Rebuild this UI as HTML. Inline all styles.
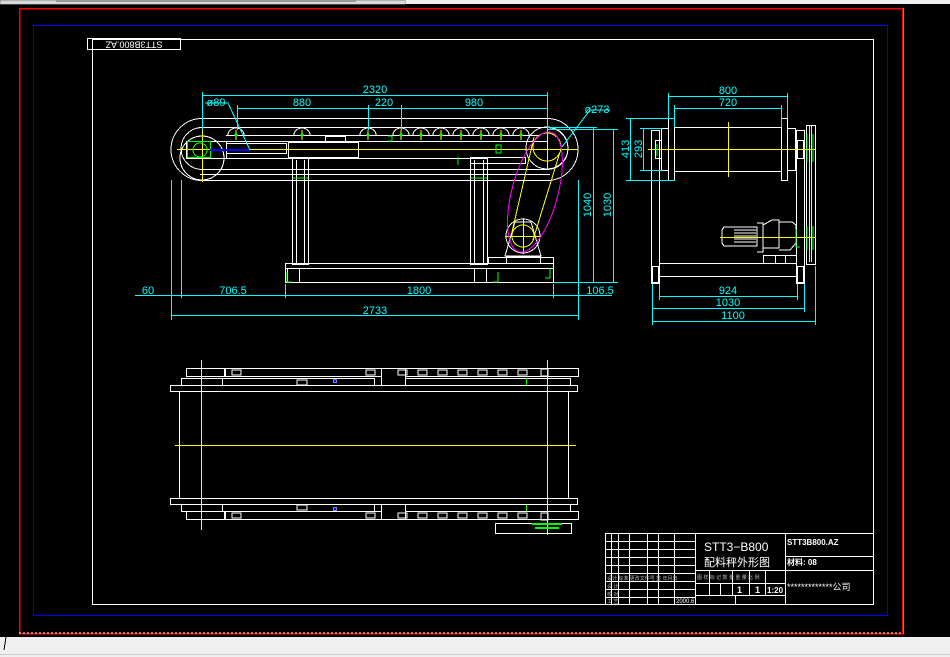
<!DOCTYPE html>
<html><head><meta charset="utf-8"><style>
html,body{margin:0;padding:0;background:#000;width:950px;height:657px;overflow:hidden}
svg{display:block}
text{font-family:"Liberation Sans","Noto Sans CJK SC",sans-serif}
</style></head><body>
<svg width="950" height="657" viewBox="0 0 950 657" xmlns="http://www.w3.org/2000/svg" shape-rendering="crispEdges">
<rect width="950" height="657" fill="#000"/>
<!-- top toolbar -->
<rect x="0" y="0" width="950" height="4" fill="#f0f0f0"/>
<rect x="0" y="0" width="405" height="4" fill="#d8d8d8" stroke="#888" stroke-width="0.5"/>
<rect x="56" y="0" width="300" height="2" fill="#999"/>
<!-- bottom bar -->
<rect x="0" y="637" width="950" height="20" fill="#f0f0f0"/>
<line x1="0" y1="654.5" x2="950" y2="654.5" stroke="#ccc"/>
<line x1="6" y1="637" x2="4" y2="650" stroke="#000"/>
<!-- borders -->
<rect x="19.5" y="8.5" width="883" height="625" fill="none" stroke="#f00" stroke-width="1.5"/>
<line x1="19" y1="633" x2="903" y2="633" stroke="#fff" stroke-dasharray="2,2"/>
<line x1="903.5" y1="8" x2="903.5" y2="634" stroke="#888"/>
<rect x="33.5" y="25.5" width="854" height="15" fill="none" stroke="#00f" stroke-width="0"/>
<rect x="33.5" y="25.5" width="854" height="590" fill="none" stroke="#00f" stroke-width="1.3"/>
<rect x="92.5" y="39.5" width="781" height="565" fill="none" stroke="#fff"/>
<!-- stamp -->
<rect x="87.5" y="38.5" width="93" height="11" fill="none" stroke="#fff"/>
<line x1="92.5" y1="38" x2="92.5" y2="50" stroke="#fff"/>
<text x="134" y="44" transform="rotate(180 134 44)" text-anchor="middle" dominant-baseline="middle" fill="#fff" font-size="9">STT3B800.AZ</text>

<g fill="none" stroke="#fff" stroke-width="1">
<!-- FRONT VIEW belt -->
<path d="M202 118.5 H547 A31 31 0 0 1 547 180.5 H202 A31 31 0 0 1 202 118.5Z"/>
<path d="M202 127.5 H547 A21 21 0 0 1 547 169.5 H202 A21 21 0 0 1 202 127.5Z"/>
<circle cx="202" cy="158" r="22"/>
<circle cx="547" cy="148" r="21"/>
<line x1="202" y1="141.5" x2="547" y2="141.5"/>
<line x1="226" y1="135.5" x2="540" y2="135.5"/>
<line x1="226" y1="158.5" x2="470" y2="158.5"/>
<line x1="200" y1="174.5" x2="550" y2="174.5"/>
<rect x="186.5" y="141.5" width="40" height="17"/>
<rect x="226.5" y="143.5" width="60" height="10"/>
<rect x="288.5" y="142.5" width="70" height="15"/>
<rect x="325.5" y="136.5" width="20" height="5"/>
<rect x="470.5" y="157.5" width="55" height="6"/>
<!-- idlers -->
<g>
<path d="M228 135 a8 7 0 0 1 16 0"/><path d="M294 135 a8 7 0 0 1 16 0"/><path d="M360 135 a8 7 0 0 1 16 0"/><path d="M393 135 a8 7 0 0 1 16 0"/><path d="M413 135 a8 7 0 0 1 16 0"/><path d="M433 135 a8 7 0 0 1 16 0"/><path d="M453 135 a8 7 0 0 1 16 0"/><path d="M473 135 a8 7 0 0 1 16 0"/><path d="M493 135 a8 7 0 0 1 16 0"/><path d="M513 135 a8 7 0 0 1 16 0"/>
</g>
<!-- legs -->
<rect x="292.5" y="158.5" width="16" height="106"/>
<line x1="296.5" y1="160" x2="296.5" y2="264"/><line x1="304.5" y1="160" x2="304.5" y2="264"/>
<rect x="470.5" y="158.5" width="17" height="106"/>
<line x1="474.5" y1="160" x2="474.5" y2="264"/><line x1="483.5" y1="160" x2="483.5" y2="264"/>
<rect x="285.5" y="263.5" width="268" height="19"/>
<line x1="285" y1="268.5" x2="553" y2="268.5"/>
<rect x="287.5" y="268.5" width="12" height="14"/><rect x="474.5" y="268.5" width="12" height="14"/>
<rect x="488.5" y="257.5" width="65" height="6"/>
<!-- drive -->
<circle cx="523" cy="236" r="17"/>
<path d="M505 256 L515 222 L531 222 L541 256Z"/>
<rect x="506.5" y="256.5" width="34" height="7"/>
</g>
<!-- yellow center lines -->
<g stroke="#ff0" stroke-width="1" fill="none">
<line x1="177" y1="149.5" x2="578" y2="149.5"/>
<line x1="202.5" y1="125" x2="202.5" y2="182"/>
<line x1="547.5" y1="128" x2="547.5" y2="170"/>
<circle cx="547" cy="147" r="14"/>
<circle cx="523" cy="236" r="11"/>
<line x1="534" y1="137" x2="512" y2="232"/>
<line x1="560" y1="152" x2="533" y2="240"/>
<line x1="505" y1="236.5" x2="541" y2="236.5"/>
<line x1="523.5" y1="218" x2="523.5" y2="254"/>
<g stroke-width="1"><line x1="236" y1="130" x2="236" y2="140"/><line x1="302" y1="130" x2="302" y2="140"/><line x1="368" y1="130" x2="368" y2="140"/><line x1="401" y1="130" x2="401" y2="140"/><line x1="421" y1="130" x2="421" y2="140"/><line x1="441" y1="130" x2="441" y2="140"/><line x1="461" y1="130" x2="461" y2="140"/><line x1="481" y1="130" x2="481" y2="140"/><line x1="501" y1="130" x2="501" y2="140"/><line x1="521" y1="130" x2="521" y2="140"/></g>
</g>
<ellipse cx="535" cy="192" rx="23" ry="62" transform="rotate(15 535 192)" fill="none" stroke="#f0f" stroke-width="1"/>
<!-- green bits -->
<g stroke="#0f0" fill="none">
<rect x="187.5" y="141.5" width="23" height="16"/>
<circle cx="200" cy="150" r="7"/>
<path d="M293 178 H308 M471 178 H487 M287 272 v10 h5 M498 272 v10 h-5 M550 268 v10 h-5 M458 157 v8 M388 136 h4 v5 h-4"/>
<rect x="496" y="145" width="5" height="8"/>
</g>
<g fill="#0f0"><circle cx="236" cy="135" r="1.5"/><circle cx="302" cy="135" r="1.5"/><circle cx="368" cy="135" r="1.5"/><circle cx="401" cy="135" r="1.5"/><circle cx="421" cy="135" r="1.5"/><circle cx="441" cy="135" r="1.5"/><circle cx="461" cy="135" r="1.5"/><circle cx="481" cy="135" r="1.5"/><circle cx="501" cy="135" r="1.5"/><circle cx="521" cy="135" r="1.5"/></g>
<line x1="210" y1="150" x2="250" y2="150" stroke="#00f" stroke-width="2"/>
<!-- dims cyan front -->
<g stroke="#0ff" stroke-width="1" fill="none">
<line x1="202" y1="95.5" x2="547" y2="95.5"/>
<line x1="237" y1="108.5" x2="547" y2="108.5"/>
<line x1="202.5" y1="92" x2="202.5" y2="130"/><line x1="547.5" y1="92" x2="547.5" y2="130"/>
<line x1="237.5" y1="105" x2="237.5" y2="130"/><line x1="368.5" y1="105" x2="368.5" y2="130"/><line x1="401.5" y1="105" x2="401.5" y2="130"/>
<path d="M205 103 H228 L250 150"/>
<path d="M610 110 H590 L562 147"/>
<line x1="135" y1="295.5" x2="612" y2="295.5"/>
<line x1="171.5" y1="180" x2="171.5" y2="320"/><line x1="578.5" y1="180" x2="578.5" y2="320"/>
<line x1="181.5" y1="180" x2="181.5" y2="298"/><line x1="285.5" y1="284" x2="285.5" y2="298"/><line x1="553.5" y1="284" x2="553.5" y2="298"/>
<line x1="171" y1="315.5" x2="578" y2="315.5"/>
<line x1="548" y1="127.5" x2="597" y2="127.5"/><line x1="548" y1="129.5" x2="618" y2="129.5"/><line x1="554" y1="282.5" x2="618" y2="282.5"/>
<line x1="593.5" y1="127" x2="593.5" y2="283"/><line x1="613.5" y1="129" x2="613.5" y2="283"/>
</g>
<g fill="#0ff" font-size="11" text-anchor="middle">
<text x="375" y="93">2320</text><text x="302" y="106">880</text><text x="384" y="106">220</text><text x="474" y="106">980</text>
<text x="216" y="106">ø89</text><text x="597" y="113">ø273</text>
<text x="148" y="294">60</text><text x="233" y="294">706.5</text><text x="419" y="294">1800</text><text x="600" y="294">106.5</text>
<text x="375" y="314">2733</text>
<text transform="translate(591 205) rotate(-90)">1040</text>
<text transform="translate(611 205) rotate(-90)">1030</text>
</g>

<!-- SIDE VIEW -->
<g fill="none" stroke="#fff">
<rect x="668.5" y="118.5" width="6" height="62"/>
<rect x="661.5" y="128.5" width="7" height="42"/>
<rect x="674.5" y="127.5" width="107" height="44"/>
<rect x="781.5" y="118.5" width="6" height="62"/>
<rect x="787.5" y="128.5" width="8" height="42"/>
<rect x="651.5" y="130.5" width="8" height="153"/>
<rect x="796.5" y="130.5" width="8" height="153"/>
<rect x="806.5" y="125.5" width="9" height="139"/>
<rect x="659.5" y="263.5" width="137" height="13"/>
<rect x="652.5" y="266.5" width="6" height="16"/><rect x="797.5" y="266.5" width="6" height="16"/>
<rect x="655.5" y="140.5" width="6" height="18"/><rect x="797.5" y="140.5" width="6" height="18"/>
<path d="M724 227 H757 V246 H724 L722 243 V230Z"/>
<path d="M757 223 H763 V252 H757"/>
<path d="M763 225 L772 220 H779 V248 H763"/>
<path d="M779 222 H792 L796 225 V243 L790 250 H779"/>
<rect x="763.5" y="255.5" width="33" height="8"/><rect x="775.5" y="255.5" width="10" height="8"/>
</g>
<g stroke="#fff"><line x1="734" y1="230" x2="756" y2="230"/><line x1="734" y1="233" x2="756" y2="233"/><line x1="734" y1="236" x2="756" y2="236"/><line x1="734" y1="239" x2="756" y2="239"/><line x1="734" y1="242" x2="756" y2="242"/></g>
<g stroke="#ff0" fill="none">
<line x1="648" y1="149.5" x2="815" y2="149.5"/>
<line x1="728.5" y1="122" x2="728.5" y2="177"/>
<line x1="720" y1="237.5" x2="816" y2="237.5"/>
<line x1="809.5" y1="126" x2="809.5" y2="262"/><line x1="811.5" y1="126" x2="811.5" y2="262"/>
</g>
<g stroke="#0f0" fill="none"><path d="M657 144 v12 M807 134 v28 M813 134 v28 M807 226 v24 M813 226 v24 M796 229 v18 h4"/></g>
<g stroke="#0ff" fill="none">
<line x1="668" y1="96.5" x2="787" y2="96.5"/><line x1="675" y1="108.5" x2="781" y2="108.5"/>
<line x1="668.5" y1="93" x2="668.5" y2="118"/><line x1="787.5" y1="93" x2="787.5" y2="118"/>
<line x1="674.5" y1="105" x2="674.5" y2="127"/><line x1="781.5" y1="105" x2="781.5" y2="127"/>
<line x1="626" y1="118.5" x2="675" y2="118.5"/><line x1="626" y1="180.5" x2="675" y2="180.5"/>
<line x1="640" y1="128.5" x2="662" y2="128.5"/><line x1="640" y1="170.5" x2="662" y2="170.5"/>
<line x1="630.5" y1="118" x2="630.5" y2="181"/><line x1="643.5" y1="128" x2="643.5" y2="171"/>
<line x1="659" y1="296.5" x2="797" y2="296.5"/><line x1="652" y1="308.5" x2="804" y2="308.5"/><line x1="652" y1="321.5" x2="815" y2="321.5"/>
<line x1="652.5" y1="284" x2="652.5" y2="325"/><line x1="659.5" y1="284" x2="659.5" y2="300"/><line x1="797.5" y1="284" x2="797.5" y2="300"/><line x1="804.5" y1="284" x2="804.5" y2="312"/><line x1="815.5" y1="266" x2="815.5" y2="325"/>
</g>
<g fill="#0ff" font-size="11" text-anchor="middle">
<text x="728" y="94">800</text><text x="728" y="106">720</text>
<text transform="translate(629 149) rotate(-90)">413</text>
<text transform="translate(642 149) rotate(-90)">293</text>
<text x="728" y="294">924</text><text x="728" y="306">1030</text><text x="733" y="319">1100</text>
</g>

<!-- PLAN VIEW -->
<g fill="none" stroke="#fff">
<rect x="170.5" y="385.5" width="407" height="6"/>
<rect x="170.5" y="498.5" width="407" height="6"/>
<line x1="179.5" y1="391" x2="179.5" y2="498"/><line x1="568.5" y1="391" x2="568.5" y2="498"/>
<rect x="186.5" y="368.5" width="38" height="8"/><rect x="225.5" y="368.5" width="156" height="8"/><rect x="381.5" y="368.5" width="24" height="17"/><rect x="405.5" y="368.5" width="173" height="8"/>
<rect x="181.5" y="378.5" width="41" height="7"/><rect x="222.5" y="378.5" width="152" height="7"/><rect x="405.5" y="378.5" width="165" height="7"/>
<rect x="186.5" y="511.5" width="38" height="8"/><rect x="225.5" y="511.5" width="156" height="8"/><rect x="381.5" y="504.5" width="24" height="15"/><rect x="405.5" y="511.5" width="173" height="8"/>
<rect x="181.5" y="504.5" width="41" height="7"/><rect x="222.5" y="504.5" width="152" height="7"/><rect x="405.5" y="504.5" width="165" height="7"/>
<rect x="495.5" y="523.5" width="76" height="10"/>
</g>
<g fill="none" stroke="#fff">
<path d="M232 370 h9 v5 h-9z M366 370 h9 v5 h-9z M398 370 h9 v5 h-9z M418 370 h9 v5 h-9z M438 370 h9 v5 h-9z M458 370 h9 v5 h-9z M478 370 h9 v5 h-9z M498 370 h9 v5 h-9z M518 370 h9 v5 h-9z"/>
<path d="M232 513 h9 v5 h-9z M366 513 h9 v5 h-9z M398 513 h9 v5 h-9z M418 513 h9 v5 h-9z M438 513 h9 v5 h-9z M458 513 h9 v5 h-9z M478 513 h9 v5 h-9z M498 513 h9 v5 h-9z M518 513 h9 v5 h-9z"/>
<path d="M297 380 h10 v5 h-10z M297 505 h10 v5 h-10z M541 369 h7 v7 h-7z M541 513 h7 v7 h-7z"/>
</g>
<g stroke="#ff0"><line x1="201.5" y1="360" x2="201.5" y2="530"/><line x1="547.5" y1="360" x2="547.5" y2="535"/><line x1="175" y1="445.5" x2="576" y2="445.5"/></g>
<g stroke="#0f0"><line x1="532" y1="524" x2="562" y2="524" stroke-width="2"/><line x1="535" y1="528" x2="559" y2="528" stroke-width="2"/><line x1="526.5" y1="378" x2="526.5" y2="385"/><line x1="526.5" y1="505" x2="526.5" y2="511"/></g>
<circle cx="335" cy="381" r="2" fill="#00f" stroke="#fff" stroke-width="0.5"/><circle cx="335" cy="509" r="2" fill="#00f" stroke="#fff" stroke-width="0.5"/>

<!-- TITLE BLOCK -->
<g fill="none" stroke="#fff">
<rect x="605.5" y="533.5" width="268" height="71"/>
<line x1="695.5" y1="533" x2="695.5" y2="605"/><line x1="785.5" y1="533" x2="785.5" y2="605"/>
<line x1="785" y1="556.5" x2="873" y2="556.5"/><line x1="785" y1="570.5" x2="873" y2="570.5"/>
<line x1="695" y1="570.5" x2="785" y2="570.5"/><line x1="695" y1="583.5" x2="785" y2="583.5"/><line x1="695" y1="595.5" x2="785" y2="595.5"/>
<line x1="605" y1="541.5" x2="695" y2="541.5"/><line x1="605" y1="549.5" x2="695" y2="549.5"/><line x1="605" y1="557.5" x2="695" y2="557.5"/><line x1="605" y1="565.5" x2="695" y2="565.5"/><line x1="605" y1="573.5" x2="695" y2="573.5"/><line x1="605" y1="581.5" x2="695" y2="581.5"/><line x1="605" y1="589.5" x2="695" y2="589.5"/><line x1="605" y1="597.5" x2="695" y2="597.5"/>
<line x1="611.5" y1="533" x2="611.5" y2="605"/><line x1="618.5" y1="533" x2="618.5" y2="605"/><line x1="629.5" y1="533" x2="629.5" y2="605"/><line x1="647.5" y1="533" x2="647.5" y2="605"/><line x1="658.5" y1="533" x2="658.5" y2="605"/><line x1="674.5" y1="533" x2="674.5" y2="605"/>
<line x1="709.5" y1="570" x2="709.5" y2="596"/><line x1="720.5" y1="583" x2="720.5" y2="596"/><line x1="732.5" y1="570" x2="732.5" y2="596"/><line x1="749.5" y1="570" x2="749.5" y2="596"/><line x1="765.5" y1="570" x2="765.5" y2="596"/>
<line x1="735.5" y1="596" x2="735.5" y2="605"/>
</g>
<g fill="#fff" font-size="12">
<text x="704" y="551">STT3−B800</text>
<text x="704" y="566" font-size="11">配料秤外形图</text>
<text x="787" y="545" font-size="8" font-weight="bold">STT3B800.AZ</text>
<text x="787" y="565" font-size="8" font-weight="bold">材料: 08</text>
<text x="787" y="590" font-size="9">*************公司</text>
<text x="737" y="593" font-size="9" font-weight="bold">1</text><text x="755" y="593" font-size="9" font-weight="bold">1</text><text x="767" y="593" font-size="8" font-weight="bold">1:20</text>
<text x="676" y="603" font-size="6">2000.6</text>
</g>
<g fill="#bbb" font-size="5"><text x="697" y="579">图 样 标 记 数 量 重 量 比 例</text><text x="607" y="580">设计 标准 更改文件号 签 年月日</text><text x="607" y="588">设 计</text><text x="607" y="596">校 对</text><text x="607" y="603">工 艺</text></g>
</svg>
</body></html>
